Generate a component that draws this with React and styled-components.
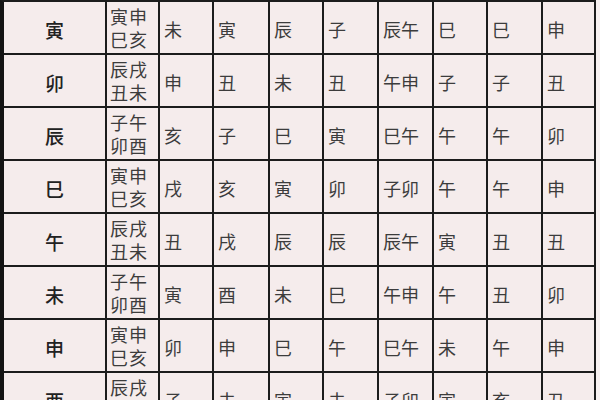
import React from "react";
import styled, { createGlobalStyle } from "styled-components";

const GlobalStyle = createGlobalStyle`
  html, body {
    margin: 0;
    padding: 0;
    background: #f7f1f1;
    overflow: hidden;
  }
  #root {
    width: 600px;
    height: 400px;
    overflow: hidden;
  }
`;

const Table = styled.div`
  display: grid;
  grid-template-columns: 103px 53px 54px 56px 54px 55px 55px 54px 55px 53px;
  grid-auto-rows: 53px;
  width: max-content;
  border-top: 2px solid #1c1c1c;
  border-left: 4px solid #141414;
  background: #f5ecec;
  font-family: "Noto Sans CJK SC", "Noto Sans CJK TC", sans-serif;
`;

const Cell = styled.div`
  box-sizing: border-box;
  border-right: 2px solid #1c1c1c;
  border-bottom: 2px solid #1c1c1c;
  display: flex;
  align-items: center;
  padding-top: 3px;
  padding-left: 4px;
  font-size: 18px;
  color: #3c3c3c;
  white-space: nowrap;
`;

const HeadCell = styled(Cell)`
  justify-content: center;
  padding-left: 0;
  font-size: 19px;
  font-weight: 500;
  color: #222;
`;

// two pairs of branches stacked in one narrow cell
const PairCell = styled(Cell)`
  padding-top: 1px;
  padding-left: 3px;
  font-size: 18px;
  letter-spacing: 1px;
  line-height: 23px;
  white-space: pre-line;
`;

const rows = [
  ["寅", "寅申\n巳亥", "未", "寅", "辰", "子", "辰午", "巳", "巳", "申"],
  ["卯", "辰戌\n丑未", "申", "丑", "未", "丑", "午申", "子", "子", "丑"],
  ["辰", "子午\n卯酉", "亥", "子", "巳", "寅", "巳午", "午", "午", "卯"],
  ["巳", "寅申\n巳亥", "戌", "亥", "寅", "卯", "子卯", "午", "午", "申"],
  ["午", "辰戌\n丑未", "丑", "戌", "辰", "辰", "辰午", "寅", "丑", "丑"],
  ["未", "子午\n卯酉", "寅", "酉", "未", "巳", "午申", "午", "丑", "卯"],
  ["申", "寅申\n巳亥", "卯", "申", "巳", "午", "巳午", "未", "午", "申"],
  ["酉", "辰戌\n丑未", "子", "未", "寅", "未", "子卯", "寅", "亥", "丑"],
];

export default function App() {
  return (
    <>
      <GlobalStyle />
      <Table>
        {rows.map((r, i) => (
          <React.Fragment key={i}>
            <HeadCell>{r[0]}</HeadCell>
            <PairCell>{r[1]}</PairCell>
            {r.slice(2).map((v, j) => (
              <Cell key={j}>{v}</Cell>
            ))}
          </React.Fragment>
        ))}
      </Table>
    </>
  );
}
